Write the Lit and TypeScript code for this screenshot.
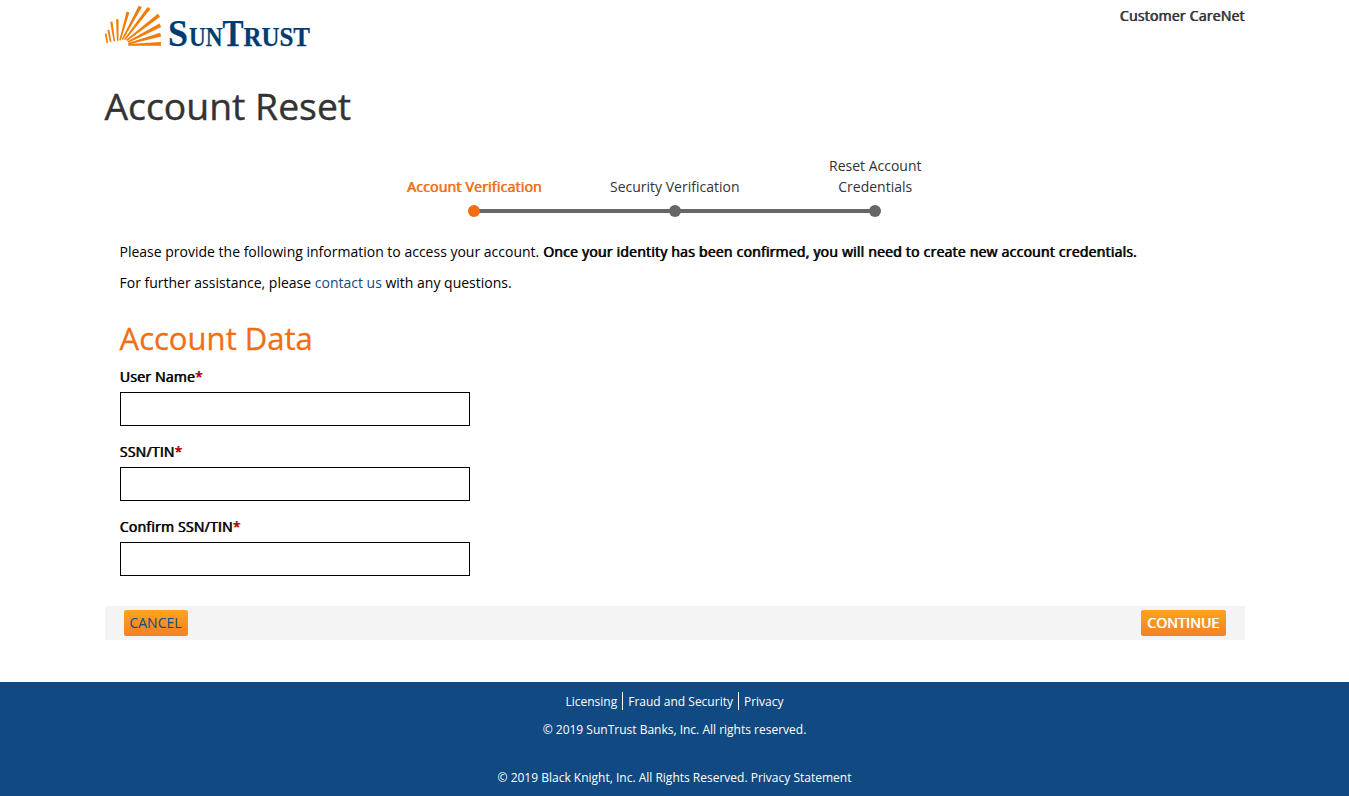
import { LitElement, html, css, svg } from "lit";
import { customElement } from "lit/decorators.js";

// Each ray: base x, base y, tip x, tip y, half width at the tip.
const RAYS: number[][] = [
  [22, 129, 17, 101, 2.6], [32, 126, 25, 90, 3], [43, 124, 34, 65, 3.4],
  [53, 122, 52, 58, 3.8], [60, 121, 84, 36, 4.4], [67, 119, 121, 19, 5],
  [74, 119, 147, 24, 5.3], [80, 121, 177, 46, 5.6], [84, 126, 181, 76, 5.8],
  [85, 131, 182, 104, 5.8],
];

function ray([bx, by, tx, ty, w]: number[]) {
  const dx = tx - bx, dy = ty - by, l = Math.hypot(dx, dy);
  const nx = -dy / l, ny = dx / l, b = 2.3;
  const pts = [[bx + nx * b, by + ny * b], [tx + nx * w, ty + ny * w], [tx - nx * w, ty - ny * w], [bx - nx * b, by - ny * b]];
  return svg`<polygon points=${pts.map((p) => p.map((v) => v.toFixed(1)).join(",")).join(" ")}></polygon>`;
}

@customElement("app-root")
export class AppRoot extends LitElement {
  static styles = css`
    :host { display: flex; flex-direction: column; min-height: 796px; background: #fff; color: #000; font: 14px/21px "Open Sans", sans-serif; }
    * { box-sizing: border-box; }
    .wrap { width: 1140px; margin-left: 104.5px; height: 682px; }
    header { display: flex; justify-content: space-between; height: 52px; }
    .logo { display: block; width: 210px; height: 60px; overflow: visible; }
    .b { text-shadow: 0.8px 0 0 currentColor; letter-spacing: 0.228px; font-weight: 400; }
    .care { color: #333; margin-top: 5px; }
    h1 { margin: 28px 0 0; font-size: 37.35px; line-height: 52px; font-weight: 400; color: #333; -webkit-text-stroke: 0.4px currentColor; }
    .steps { display: grid; grid-template-columns: repeat(3, 200.5px); margin: 24px 0 0 269.5px; width: 602px; color: #333; text-align: center; }
    .step { display: flex; flex-direction: column; justify-content: flex-end; align-items: center; height: 61px; }
    .label { width: 140px; margin-bottom: 8px; }
    .active { color: #f06f16; }
    .node { display: grid; grid-template-columns: 1fr 12px 1fr; align-items: center; width: 100%; height: 12px; }
    .line { height: 4px; background: #666; margin: 0 -1px; }
    .none { background: none; }
    .dot { width: 12px; height: 12px; border-radius: 50%; background: #666; }
    .active .dot { background: #f06f16; z-index: 1; }
    .body { padding-left: 15px; }
    p { margin: 0; }
    .intro { margin-top: 24px; }
    .help { margin-top: 10px; }
    a { color: #114a82; text-decoration: none; }
    h2 { margin: 23px 0 0; font-size: 31.05px; line-height: 44px; font-weight: 400; color: #f06f16; -webkit-text-stroke: 0.3px currentColor; }
    .fields { padding-top: 6px; }
    .field { display: block; height: 75px; }
    .name { display: block; height: 26px; }
    .req { color: #a00; }
    input { display: block; width: 350px; height: 34px; border: 1px solid #000; background: #fff; padding: 6px 12px; font: inherit; outline: 0; }
    .bar { display: flex; justify-content: space-between; align-items: center; height: 34px; margin-top: 15px; padding: 0 19px; background: #f4f4f4; }
    button { height: 26px; border: 0; border-radius: 2px; padding: 0; font: 14px/26px "Open Sans", sans-serif; background: linear-gradient(#faa51f, #f58026); color: #114a82; width: 64px; }
    button.go { width: 85px; color: #fff; }
    footer { height: 114px; background: #114a82; color: #fff; font-size: 12px; line-height: 18px; text-align: center; padding-top: 10px; }
    footer a { color: #fff; }
    .links { display: flex; justify-content: center; }
    .links a { height: 18px; line-height: 20px; }
    .links a + a { border-left: 1px solid #fff; margin-left: 5px; padding-left: 5px; }
    .copy { margin-top: 11px; }
    .vendor { margin-top: 30px; }
  `;

  private step(label: string, i: number) {
    return html`<div class="step ${i === 0 ? "active" : ""}">
      <span class="label ${i === 0 ? "b" : ""}">${label}</span>
      <div class="node"><i class="line ${i === 0 ? "none" : ""}"></i><i class="dot"></i><i class="line ${i === 2 ? "none" : ""}"></i></div>
    </div>`;
  }

  private field(label: string) {
    return html`<label class="field"><span class="name b">${label}<span class="req">*</span></span><input type="text" /></label>`;
  }

  render() {
    return html`
      <div class="wrap">
        <header>
          <svg class="logo" viewBox="0 0 210 60" role="img" aria-label="SunTrust">
            <g fill="#f07d0a" transform="translate(-5 0) scale(.33333)">${RAYS.map(ray)}<polygon points="85,132 183,126 183,137 85,137"></polygon></g>
            <text y="45.7" fill="#003b71" stroke="#003b71" stroke-width=".25" font-family="Liberation Serif, serif" font-weight="700"><tspan x="63" font-size="38" textLength="20" lengthAdjust="spacingAndGlyphs">S</tspan><tspan x="84" font-size="28" textLength="33.5" lengthAdjust="spacingAndGlyphs">UN</tspan><tspan x="117.5" font-size="38" textLength="21" lengthAdjust="spacingAndGlyphs">T</tspan><tspan x="138.5" font-size="28" textLength="66.5" lengthAdjust="spacingAndGlyphs">RUST</tspan></text>
          </svg>
          <span class="care b">Customer CareNet</span>
        </header>
        <h1>Account Reset</h1>
        <div class="steps">${["Account Verification", "Security Verification", "Reset Account Credentials"].map((s, i) => this.step(s, i))}</div>
        <div class="body">
          <p class="intro">Please provide the following information to access your account. <span class="b">Once your identity has been confirmed, you will need to create new account credentials.</span></p>
          <p class="help">For further assistance, please <a href="#">contact us</a> with any questions.</p>
          <h2>Account Data</h2>
          <div class="fields">${["User Name", "SSN/TIN", "Confirm SSN/TIN"].map((f) => this.field(f))}</div>
        </div>
        <div class="bar"><button>CANCEL</button><button class="go b">CONTINUE</button></div>
      </div>
      <footer>
        <nav class="links"><a href="#">Licensing</a><a href="#">Fraud and Security</a><a href="#">Privacy</a></nav>
        <p class="copy">© 2019 SunTrust Banks, Inc. All rights reserved.</p>
        <p class="vendor">© 2019 Black Knight, Inc. All Rights Reserved. <a href="#">Privacy Statement</a></p>
      </footer>`;
  }
}
